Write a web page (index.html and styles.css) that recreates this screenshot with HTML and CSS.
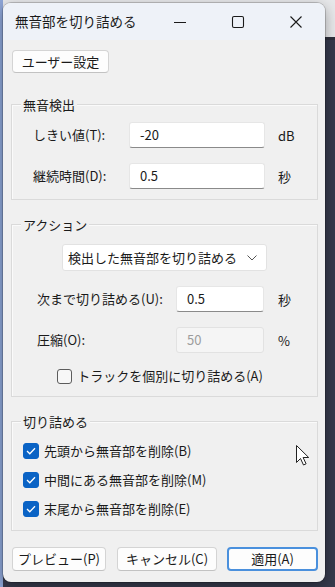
FILE: index.html
```html
<!DOCTYPE html>
<html lang="ja">
<head>
    <meta charset="UTF-8">
    <title>無音部を切り詰める</title>
    <link rel="stylesheet" href="styles.css">
</head>
<body>
    <div class="window">
        <div class="titlebar">
            <div class="title">無音部を切り詰める</div>
            <div class="caption-btn">
                <svg width="14" height="14" viewBox="0 0 14 14"><path d="M1 7.5h12" stroke="#1a1a1a" stroke-width="1.1"/></svg>
            </div>
            <div class="caption-btn">
                <svg width="14" height="14" viewBox="0 0 14 14"><rect x="1.5" y="1.5" width="11" height="11" rx="1.5" fill="none" stroke="#1a1a1a" stroke-width="1.1"/></svg>
            </div>
            <div class="caption-btn">
                <svg width="14" height="14" viewBox="0 0 14 14"><path d="M1.5 1.5l11 11M12.5 1.5l-11 11" stroke="#1a1a1a" stroke-width="1.1"/></svg>
            </div>
        </div>

        <div class="content">
            <div class="top-row">
                <button class="btn preset">ユーザー設定</button>
            </div>

            <div class="group detect-group">
                <div class="group-title">無音検出</div>
                <div class="form-grid detect">
                    <label>しきい値(T):</label>
                    <div class="input">-20</div>
                    <span class="unit">dB</span>
                    <label>継続時間(D):</label>
                    <div class="input">0.5</div>
                    <span class="unit">秒</span>
                </div>
            </div>

            <div class="group action">
                <div class="group-title">アクション</div>
                <div class="select-row">
                    <div class="select">
                        <span>検出した無音部を切り詰める</span>
                        <svg width="10" height="6" viewBox="0 0 10 6"><path d="M0.5 0.5l4.5 4.5 4.5-4.5" fill="none" stroke="#555" stroke-width="1"/></svg>
                    </div>
                </div>
                <div class="form-grid truncate">
                    <label>次まで切り詰める(U):</label>
                    <div class="input">0.5</div>
                    <span class="unit">秒</span>
                    <label>圧縮(O):</label>
                    <div class="input disabled">50</div>
                    <span class="unit">%</span>
                </div>
                <div class="check-center">
                    <div class="check">
                        <span class="box"></span>
                        <span>トラックを個別に切り詰める(A)</span>
                    </div>
                </div>
            </div>

            <div class="group trim">
                <div class="group-title">切り詰める</div>
                <div class="check-list">
                    <div class="check">
                        <span class="box checked"><svg width="10" height="8" viewBox="0 0 10 8"><path d="M1 4l2.8 2.8L9 1.2" fill="none" stroke="#fff" stroke-width="1.3"/></svg></span>
                        <span>先頭から無音部を削除(B)</span>
                    </div>
                    <div class="check">
                        <span class="box checked"><svg width="10" height="8" viewBox="0 0 10 8"><path d="M1 4l2.8 2.8L9 1.2" fill="none" stroke="#fff" stroke-width="1.3"/></svg></span>
                        <span>中間にある無音部を削除(M)</span>
                    </div>
                    <div class="check">
                        <span class="box checked"><svg width="10" height="8" viewBox="0 0 10 8"><path d="M1 4l2.8 2.8L9 1.2" fill="none" stroke="#fff" stroke-width="1.3"/></svg></span>
                        <span>末尾から無音部を削除(E)</span>
                    </div>
                </div>
            </div>

            <div class="buttons">
                <button class="btn preview">プレビュー(P)</button>
                <button class="btn cancel">キャンセル(C)</button>
                <button class="btn apply">適用(A)</button>
            </div>
        </div>

        <svg class="cursor" width="14" height="22" viewBox="0 0 14 22">
            <path d="M0.5 0.5v17l4-4 3 6.5 2.6-1.2-3-6.3h5.6z" fill="#fff" stroke="#222" stroke-width="1"/>
        </svg>
    </div>
</body>
</html>
```

FILE: styles.css
```css
body {
    margin: 0;
    height: 587px;
    overflow: hidden;
    font-family: "Noto Sans CJK JP", "Noto Sans", sans-serif;
    font-size: 13px;
    color: #1a1a1a;
    background:
        linear-gradient(to right, #8da5d6 0 3px, transparent 3px),
        linear-gradient(#e7e8ea 0 37px, #2e303c 37px 40px, #363a4c 40px);
}
.window {
    position: relative;
    margin: 3px 0 0 3px;
    width: 322px;
    height: 579px;
    background: #f0f0f0;
    border-radius: 8px;
    overflow: hidden;
    box-shadow: 0 0 0 1px rgba(0,0,0,0.18), 0 4px 14px rgba(0,0,0,0.35);
}
.titlebar {
    height: 37px;
    background: #eef2f8;
    display: flex;
    align-items: center;
}
.title {
    flex: 1;
    padding-left: 12px;
    font-size: 13.5px;
    line-height: 16px;
    padding-bottom: 1px;
}
.caption-btn {
    width: 58px;
    height: 37px;
    display: flex;
    align-items: center;
    justify-content: center;
}
.content {
    padding: 0 7px 0 8px;
}
.top-row {
    padding-top: 10px;
}
.btn {
    font-family: inherit;
    font-size: 13px;
    color: #1a1a1a;
    background: #fdfdfd;
    border: 1px solid #d4d4d4;
    border-bottom-color: #c2c2c2;
    border-radius: 4px;
    height: 24px;
    padding: 0;
    line-height: 20px;
}
.preset {
    margin-left: 1px;
    width: 97px;
    height: 23px;
}
.group {
    margin-top: 24px;
    border: 1px solid #dadada;
    box-shadow: inset 1px 1px 0 #fafafa;
    padding: 0 0 11px 0;
}
.detect-group {
    margin-top: 31px;
    padding-bottom: 10px;
}
.group-title {
    width: fit-content;
    margin: -8px 0 0 9px;
    padding: 0 2px;
    background: #f0f0f0;
    line-height: 15px;
}
.form-grid {
    display: grid;
    align-items: center;
    row-gap: 15px;
}
.detect {
    margin-top: 10px;
    padding-left: 21px;
    grid-template-columns: 96px 136px auto;
}
.detect .unit {
    padding-left: 13px;
}
.truncate {
    margin-top: 15px;
    padding-left: 25px;
    grid-template-columns: 139px 88px auto;
}
.truncate .unit {
    padding-left: 14px;
}
label {
    line-height: 16px;
}
.input {
    box-sizing: border-box;
    height: 26px;
    background: #fff;
    border: 1px solid #e6e6e6;
    border-bottom: 1px solid #8a8a8a;
    border-radius: 3px;
    padding: 0 10px;
    line-height: 24px;
}
.input.disabled {
    background: #f5f5f5;
    border-color: #e2e2e2;
    color: #9d9d9d;
}
.select-row {
    margin-top: 12px;
    display: flex;
    justify-content: center;
}
.select {
    box-sizing: border-box;
    width: 205px;
    height: 27px;
    background: #fff;
    border: 1px solid #e2e2e2;
    border-radius: 3px;
    display: flex;
    align-items: center;
    justify-content: space-between;
    padding: 0 9px 0 5px;
}
.check-center {
    margin-top: 15px;
    display: flex;
    justify-content: center;
    padding-right: 9px;
}
.check {
    display: flex;
    align-items: center;
    gap: 5px;
    height: 16px;
    line-height: 16px;
}
.box {
    box-sizing: border-box;
    width: 15px;
    height: 15px;
    border: 1px solid #5c5c5c;
    border-radius: 3px;
    background: #f7f7f7;
    display: flex;
    align-items: center;
    justify-content: center;
}
.box.checked {
    width: 16px;
    height: 16px;
    background: #0a63c5;
    border-color: #0a63c5;
}
.action {
    padding-bottom: 12px;
}
.trim {
    padding-bottom: 13px;
}
.check-list {
    margin-top: 14px;
    padding-left: 11px;
    display: flex;
    flex-direction: column;
    gap: 13px;
}
.buttons {
    margin-top: 16px;
    display: flex;
    padding-left: 1px;
}
.preview {
    width: 94px;
}
.cancel {
    margin-left: 11px;
    width: 100px;
}
.apply {
    margin-left: 10px;
    width: 91px;
    border: 2px solid #4a90dd;
    line-height: 18px;
}
.cursor {
    position: absolute;
    left: 293px;
    top: 442px;
}
```
